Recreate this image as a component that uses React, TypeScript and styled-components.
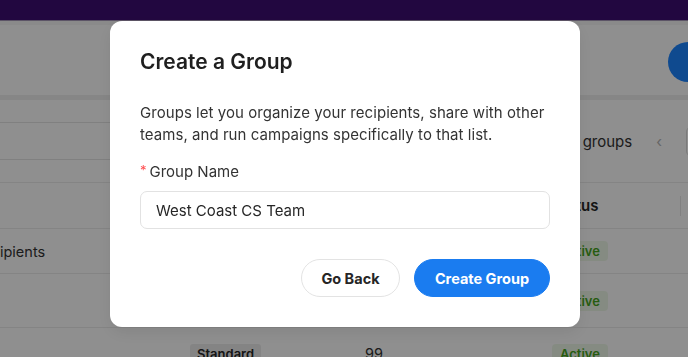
import React from "react";
import styled, { createGlobalStyle } from "styled-components";

const Global = createGlobalStyle`
  * { box-sizing: border-box; }
  html, body { margin: 0; padding: 0; }
  body {
    font-family: Inter, "Noto Sans", "Liberation Sans", sans-serif;
    color: #262626;
    background: #ffffff;
    overflow: hidden;
    width: 688px;
    height: 357px;
  }
`;

const Page = styled.div`
  width: 688px;
  height: 357px;
  overflow: hidden;
  display: flex;
  flex-direction: column;
  background: #ffffff;
`;

const TopBar = styled.div`
  height: 21px;
  flex: none;
  background: #3d0e72;
  border-bottom: 1px solid #a596b6;
`;

const Header = styled.div`
  height: 74px;
  flex: none;
  display: flex;
  align-items: center;
  justify-content: flex-end;
  padding-top: 4px;
  border-top: 4px solid #f6f6f6;
`;

const Avatar = styled.div`
  width: 40px;
  height: 40px;
  border-radius: 50%;
  background: #1b84ff;
  margin-right: -20px;
  flex: none;
`;

const Band = styled.div`
  height: 5px;
  flex: none;
  background: #efefef;
`;

const Toolbar = styled.div`
  height: 82px;
  flex: none;
  display: flex;
  align-items: center;
  justify-content: space-between;
`;

const SearchBox = styled.div`
  width: 320px;
  height: 38px;
  margin-left: -20px;
  border: 1px solid #e4e4e4;
  border-radius: 6px;
`;

const Pager = styled.div`
  display: flex;
  align-items: center;
  gap: 24px;
  font-size: 15px;
  color: #333;
  margin-right: -58px;
`;

const PagerArrow = styled.span`
  color: #b5b5b5;
  font-size: 15px;
`;

const PageSelect = styled.div`
  width: 60px;
  height: 31px;
  border: 1px solid #dcdcdc;
  border-radius: 6px;
`;

const Table = styled.div`
  margin-left: -61px;
  width: calc(100% + 61px);
  display: flex;
  flex-direction: column;
  border-top: 1px solid #ececec;
`;

const Row = styled.div<{ $h: number }>`
  display: grid;
  grid-template-columns: 251px 175px 187px 128px 1fr;
  align-items: center;
  height: ${(p) => p.$h}px;
  border-bottom: 1px solid #ececec;
  font-size: 14.5px;
  color: #333;
`;

const HeadCell = styled.div<{ $sep?: boolean }>`
  font-weight: 600;
  font-size: 15px;
  color: #262626;
  height: 20px;
  display: flex;
  align-items: center;
  border-left: ${(p) => (p.$sep ? "1px solid #e6e6e6" : "none")};
  padding-left: ${(p) => (p.$sep ? "12px" : "0")};
`;

const NameCell = styled.div`
  padding-left: 14px;
  white-space: nowrap;
`;

const HeadName = styled.div`
  padding-left: 8px;
  font-weight: 600;
  font-size: 14px;
  color: #262626;
`;

const Cell = styled.div`
  white-space: nowrap;
`;

const TypeTag = styled.span`
  display: inline-block;
  background: #ececec;
  color: #262626;
  font-size: 13px;
  font-weight: 600;
  padding: 2px 7px;
  border-radius: 3px;
`;

const StatusTag = styled.span`
  display: inline-block;
  background: #eef8e8;
  color: #45a51d;
  font-size: 13px;
  font-weight: 600;
  padding: 2px 8px;
  border-radius: 4px;
`;

const Overlay = styled.div`
  position: fixed;
  inset: 0;
  background: rgba(0, 0, 0, 0.44);
  display: flex;
  justify-content: center;
  align-items: flex-start;
  padding: 21px 0 0 2px;
`;

const Modal = styled.div`
  width: 470px;
  background: #ffffff;
  border-radius: 12px;
  padding: 27px 30px 30px;
  box-shadow: 0 6px 16px rgba(0, 0, 0, 0.08);
  display: flex;
  flex-direction: column;
`;

const Title = styled.h2`
  margin: 0;
  font-size: 21px;
  line-height: 28px;
  font-weight: 600;
  color: #1f1f1f;
`;

const Description = styled.p`
  margin: 26px 0 0;
  font-size: 15px;
  line-height: 22px;
  letter-spacing: 0.05px;
  color: #333;
`;

const Label = styled.label`
  margin-top: 15px;
  font-size: 15px;
  line-height: 22px;
  color: #333;
  display: flex;
  align-items: center;
`;

const Required = styled.span`
  color: #ff4d4f;
  font-size: 13px;
  margin-right: 3px;
  position: relative;
  top: -2px;
`;

const Input = styled.input`
  margin-top: 8px;
  height: 38px;
  width: 100%;
  border: 1px solid #e2e2e2;
  border-radius: 7px;
  padding: 0 15px;
  font-family: inherit;
  font-size: 15px;
  color: #262626;
  outline: none;
`;

const Actions = styled.div`
  margin-top: 30px;
  display: flex;
  justify-content: flex-end;
  gap: 14px;
`;

const Button = styled.button<{ $primary?: boolean; $w: number }>`
  height: 38px;
  width: ${(p) => p.$w}px;
  border-radius: 19px;
  font-family: inherit;
  font-size: 14.5px;
  font-weight: 700;
  cursor: pointer;
  padding: 0;
  border: 1px solid ${(p) => (p.$primary ? "#1a7cf0" : "#e3e3e3")};
  background: ${(p) => (p.$primary ? "#1a7cf0" : "#ffffff")};
  color: ${(p) => (p.$primary ? "#ffffff" : "#262626")};
`;

const rows = [
  { name: "All Recipients", type: "Standard", count: "1,204", h: 45 },
  { name: "VIP", type: "Standard", count: "312", h: 54 },
  { name: "Leads", type: "Standard", count: "99", h: 52 },
];

export default function App() {
  return (
    <>
      <Global />
      <Page>
        <TopBar />
        <Header>
          <Avatar />
        </Header>
        <Band />
        <Toolbar>
          <SearchBox />
          <Pager>
            <span>1-5 of 5 groups</span>
            <PagerArrow>‹</PagerArrow>
            <PageSelect />
          </Pager>
        </Toolbar>
        <Table>
          <Row $h={46}>
            <HeadName>Name</HeadName>
            <HeadCell>Type</HeadCell>
            <HeadCell>Recipients</HeadCell>
            <HeadCell>Status</HeadCell>
            <HeadCell $sep />
          </Row>
          {rows.map((r) => (
            <Row key={r.name} $h={r.h}>
              <NameCell>{r.name}</NameCell>
              <Cell>
                <TypeTag>{r.type}</TypeTag>
              </Cell>
              <Cell>{r.count}</Cell>
              <Cell>
                <StatusTag>Active</StatusTag>
              </Cell>
              <Cell />
            </Row>
          ))}
        </Table>
      </Page>
      <Overlay>
        <Modal>
          <Title>Create a Group</Title>
          <Description>
            Groups let you organize your recipients, share with other teams,
            and run campaigns specifically to that list.
          </Description>
          <Label>
            <Required>*</Required>Group Name
          </Label>
          <Input defaultValue="West Coast CS Team" />
          <Actions>
            <Button $w={99}>Go Back</Button>
            <Button $primary $w={136}>
              Create Group
            </Button>
          </Actions>
        </Modal>
      </Overlay>
    </>
  );
}
